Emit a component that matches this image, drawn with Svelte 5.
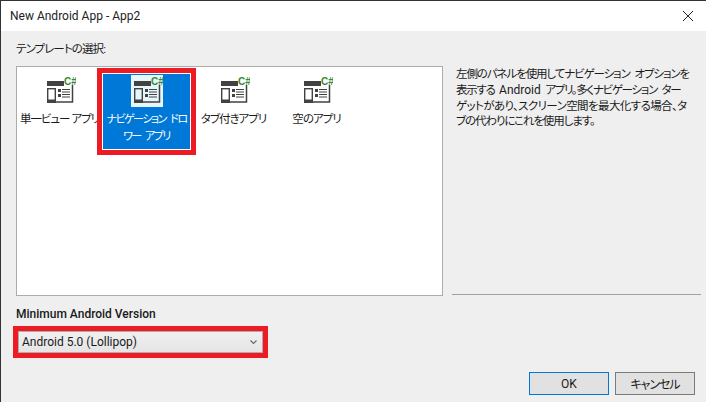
<script>
  const templates = [
    { name: ["単一ビュー アプリ"] },
    { name: ["ナビゲーション ドロ", "ワー アプリ"], selected: true },
    { name: ["タブ付きアプリ"] },
    { name: ["空のアプリ"] }
  ];
</script>

<div class="window">
  <header class="titlebar">
    <span class="title">New Android App - App2</span>
    <svg class="close" viewBox="0 0 10 10" width="10" height="10">
      <path d="M0 0L10 10M10 0L0 10" stroke="#222" stroke-width="1" fill="none" />
    </svg>
  </header>

  <main class="content">
    <div class="heading">テンプレートの選択:</div>
    <div class="panels">
      <div class="list">
        {#each templates as t}
          <div class="tile" class:selected={t.selected}>
            <div class="icon-box">
              <svg viewBox="0 0 32 32" width="32" height="32">
                <rect x="3" y="6" width="17" height="5" fill="#424242" />
                <path d="M28.500 10v17H12" stroke="#424242" stroke-width="1.500" fill="none" />
                <rect x="3.700" y="13.700" width="7.600" height="13.600" fill="none" stroke="#424242" stroke-width="1.400" />
                <rect x="3" y="24.500" width="9" height="3" fill="#424242" />
                <rect x="14" y="14" width="3" height="3" fill="#424242" />
                <rect x="14" y="19" width="3" height="3" fill="#424242" />
                <path d="M18 14.500h8M18 17h8M18 19.500h8M18 22h8" stroke="#424242" stroke-width="1" />
                <text x="20" y="10" class="cs">C#</text>
              </svg>
            </div>
            <div class="name">
              {#each t.name as line}
                <div class="line">{line}</div>
              {/each}
            </div>
          </div>
        {/each}
      </div>
      <aside class="side">
        <div class="desc">
          <div>左側のパネルを使用してナビゲーション オプションを</div>
          <div class="tight">表示する <span class="latin">Android</span> アプリ。多くナビゲーション ター</div>
          <div class="loose">ゲットがあり、スクリーン空間を最大化する場合、タ</div>
          <div>ブの代わりにこれを使用します。</div>
        </div>
        <div class="sep"></div>
      </aside>
    </div>

    <div class="version-label">Minimum Android Version</div>
    <div class="combo-mark">
      <div class="combo">
        <span>Android 5.0 (Lollipop)</span>
        <svg viewBox="0 0 7 5" width="7" height="5">
          <path d="M.5 .5l3 3 3-3" stroke="#666" stroke-width="1.100" fill="none" />
        </svg>
      </div>
    </div>

    <footer class="buttons">
      <button class="ok">OK</button>
      <button class="jp">キャンセル</button>
    </footer>
  </main>
</div>

<style>
  :global(body) {
    margin: 0;
    background: #efefef;
  }
  .window {
    width: 706px;
    height: 402px;
    box-sizing: border-box;
    border-left: 1px solid #333;
    border-top: 1px solid #333;
    background: #efefef;
    color: #1a1a1a;
    font-family: Roboto, "Noto Sans CJK JP", sans-serif;
    font-size: 12px;
    font-feature-settings: "palt" 1;
    overflow: hidden;
  }
  .titlebar {
    height: 30px;
    background: #fff;
    display: flex;
    align-items: center;
    justify-content: space-between;
    padding: 0 13px 0 9px;
  }
  .title {
    font-size: 12px;
    color: #222;
  }
  .content {
    padding: 0 0 0 15px;
  }
  .heading {
    height: 35px;
    line-height: 36px;
    font-size: 11.500px;
    letter-spacing: -0.9px;
  }
  .panels {
    display: flex;
    height: 230px;
  }
  .list {
    width: 427px;
    flex: none;
    box-sizing: border-box;
    border: 1px solid #acacac;
    background: #fff;
    display: flex;
    align-items: flex-start;
    padding: 7px 0 0 0;
  }
  .tile {
    width: 85px;
    height: 75px;
    box-sizing: border-box;
    display: flex;
    flex-direction: column;
    align-items: center;
    padding-top: 1px;
    overflow: hidden;
    flex: none;
  }
  .tile:last-child {
    margin-left: -2px;
  }
  .tile.selected {
    width: 87px;
    margin: 0 1px;
    background: #0078d7;
    color: #fff;
    outline: 5px solid #ed1c24;
    outline-offset: 1px;
    box-shadow: 0 0 0 1px #fff;
  }
  .icon-box {
    width: 32px;
    height: 32px;
    flex: none;
  }
  .selected .icon-box {
    background: #e6f6fb;
  }
  .cs {
    font-family: "Liberation Sans", sans-serif;
    font-size: 10px;
    font-weight: 700;
    fill: #388a34;
  }
  .name {
    margin-top: 4px;
    width: 100%;
    text-align: center;
    line-height: 17px;
    font-size: 11.500px;
    letter-spacing: -1px;
    white-space: nowrap;
  }
  .selected .name {
    font-size: 11px;
    letter-spacing: -1.500px;
    word-spacing: 3px;
  }
  .side {
    flex: 1;
    display: flex;
    flex-direction: column;
    justify-content: space-between;
    padding: 0 5px 0 9px;
  }
  .desc {
    padding: 1px 0 0 4px;
    line-height: 15.800px;
    font-size: 11.500px;
    letter-spacing: -1.100px;
    word-spacing: 3px;
    white-space: nowrap;
  }
  .tight {
    letter-spacing: -1.300px;
  }
  .loose {
    letter-spacing: -0.600px;
  }
  .latin {
    font-size: 12px;
    letter-spacing: 0;
  }
  .sep {
    height: 1px;
    background: #a0a0a0;
    margin-bottom: 1px;
  }
  .version-label {
    margin-top: 10px;
    line-height: 17px;
    font-size: 12px;
    font-weight: 500;
  }
  .combo-mark {
    width: 255px;
    height: 32px;
    box-sizing: border-box;
    margin: 3px 0 0 -3px;
    border: 5px solid #ed1c24;
    background: #fff;
  }
  .combo {
    height: 100%;
    box-sizing: border-box;
    border: 1px solid #adadad;
    background: linear-gradient(#f0f0f0, #e5e5e5);
    display: flex;
    align-items: center;
    justify-content: space-between;
    padding: 0 5px 0 3px;
  }
  .buttons {
    display: flex;
    justify-content: flex-end;
    gap: 6px;
    margin-top: 14px;
    padding-right: 11px;
  }
  button {
    width: 80px;
    height: 23px;
    box-sizing: border-box;
    border: 1px solid #7a7a7a;
    background: #e1e1e1;
    color: #1a1a1a;
    font: inherit;
    padding: 0;
  }
  .ok {
    border: 1px solid #0078d7;
  }
  .jp {
    letter-spacing: -1px;
  }
</style>
